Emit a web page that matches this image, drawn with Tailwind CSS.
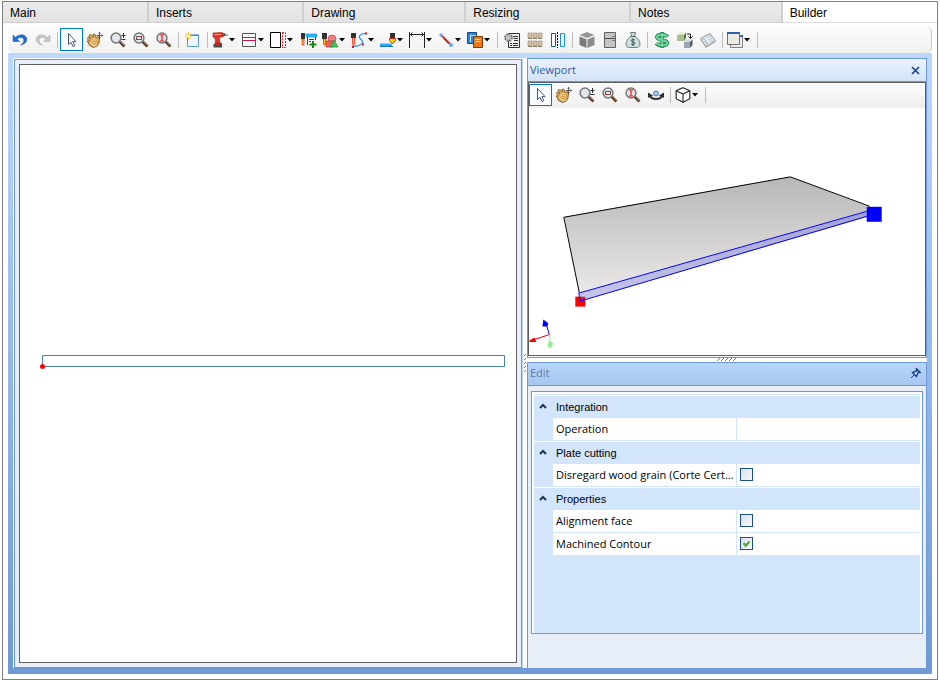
<!DOCTYPE html>
<html lang="en">
<head>
  <meta charset="UTF-8">
  <meta name="viewport" content="width=device-width, initial-scale=1">
  <title>Builder</title>
  <script src="https://cdn.jsdelivr.net/npm/@tailwindcss/browser@4"></script>
</head>
<body class="bg-white h-screen px-[2px] py-px font-['Open_Sans',sans-serif] text-[11px] text-black">

  <!-- Shared icons -->
  <svg class="hidden" aria-hidden="true">
    <symbol id="iconPointer" viewBox="0 0 16 16">
      <path d="M4.500 1.500v11l2.500-2.200 2 4.200 1.800-.9-2-4h3.200z" fill="#fff" stroke="#4a5878"/>
    </symbol>
    <symbol id="iconHand" viewBox="0 0 16 16">
      <path d="M0 6.500 1.500 5l2.500 2-2-3.500L3.500 2l3 3.500L6 2.500l1.500-.5L9.500 6l1.300-1.500 1.700 1-.5 5.500-2 3-3.500 1.500-4-2L1 10.500l-1-1.500L2.500 9z" fill="#e2ae5c" stroke="#7a5020" stroke-width=".9"/>
      <path d="M3 10l4 4 3-1M4 7l2 2M6.500 5.500l1.500 3" stroke="#fbe0a8" fill="none"/>
      <path d="M12.500 0v7M9.500 3.500h7M11.500 1.500l1-1 1 1M11.500 5.500l1 1 1-1M14.500 2.500l1 1-1 1" stroke="#404040" fill="none" stroke-width=".8"/>
    </symbol>
    <symbol id="iconLens" viewBox="0 0 16 16">
      <path d="M9.500 9.500l5 5" stroke="#5c3d28" stroke-width="2.800"/>
      <path d="M10 9l4.500 4.500" stroke="#b58a5c" stroke-width=".9"/>
      <circle cx="6" cy="6" r="4.900" fill="#dfe6ee" stroke="#767676" stroke-width="1.500"/>
    </symbol>
    <symbol id="iconZoomDynamic" viewBox="0 0 16 16">
      <use href="#iconLens" width="16" height="16"/>
      <path d="M11.500 3.500h4M13.500 1v5M11.500 7.500h4" stroke="#303030" fill="none"/>
    </symbol>
    <symbol id="iconZoomWindow" viewBox="0 0 16 16">
      <use href="#iconLens" width="16" height="16"/>
      <path d="M3.500 4.500h5v3h-5z" stroke="#555" fill="#f4dede"/>
      <path d="M3 7.500h3M6.500 4.500h2.500" stroke="#d02020"/>
    </symbol>
    <symbol id="iconZoomAll" viewBox="0 0 16 16">
      <use href="#iconLens" width="16" height="16"/>
      <path d="M6 3v6M4 3h4M4 9h4" stroke="#f04848" stroke-width="1.600"/>
    </symbol>
    <symbol id="iconArrow" viewBox="0 0 6 4">
      <path d="M0 0h6L3 3.500z" fill="#000"/>
    </symbol>
    <symbol id="iconChevron" viewBox="0 0 8 6">
      <path d="M1 5l3-3 3 3" fill="none" stroke="#17375e" stroke-width="2"/>
    </symbol>
  </svg>

  <div class="flex h-full flex-col border border-[#808080] pb-[5px]">

    <!-- Tabs -->
    <nav class="flex h-[21px] shrink-0 font-['Liberation_Sans',Arial,sans-serif] text-[12px] leading-[22px]">
      <a href="#" class="flex-[145] border-r-2 border-b border-[#d0d0d0] bg-linear-to-b from-[#ebebeb] to-[#e2e2e2] pl-[7px]">Main</a>
      <a href="#" class="flex-[155] border-r-2 border-b border-[#d0d0d0] bg-linear-to-b from-[#ebebeb] to-[#e2e2e2] pl-[7px]">Inserts</a>
      <a href="#" class="flex-[162] border-r-2 border-b border-[#d0d0d0] bg-linear-to-b from-[#ebebeb] to-[#e2e2e2] pl-[7px]">Drawing</a>
      <a href="#" class="flex-[165] border-r-2 border-b border-[#d0d0d0] bg-linear-to-b from-[#ebebeb] to-[#e2e2e2] pl-[7px]">Resizing</a>
      <a href="#" class="flex-[151] border-r-2 border-b border-[#d0d0d0] bg-linear-to-b from-[#ebebeb] to-[#e2e2e2] pl-[7px]">Notes</a>
      <a href="#" class="flex-[156] border-b border-[#dcdcdc] bg-white pl-[7px]" aria-current="page">Builder</a>
    </nav>

    <!-- Main toolbar -->
    <div class="mx-[5px] mt-[3px] flex h-[27px] shrink-0 items-center rounded-md border-r border-[#c8c8c8] bg-linear-to-b from-[#fdfdfd] to-[#f0f0f0]" role="toolbar" aria-label="Main">
      <button type="button" class="grid h-[23px] w-[23px] place-items-center" aria-label="Undo">
        <svg class="size-4" viewBox="0 0 16 16"><path d="M1 3v6.500h6.500L5.200 7.200C7.500 4.500 12 5 11.800 8.500c-.1 2-1.500 3.500-3.300 4.500 4-.5 6.500-3 6.300-6C14.500 2.500 7.500 1 3.500 5.500z" fill="#1f6fd0" stroke="#1554a8" stroke-width=".5"/></svg>
      </button>
      <button type="button" class="grid h-[23px] w-[23px] place-items-center" aria-label="Redo">
        <svg class="size-4" viewBox="0 0 16 16"><path d="M15 3v6.500H8.500l2.300-2.300C8.500 4.500 4 5 4.200 8.500c.1 2 1.500 3.500 3.300 4.500-4-.5-6.500-3-6.300-6C1.500 2.500 8.500 1 12.500 5.500z" fill="#c6c6c6" stroke="#ababab" stroke-width=".5"/></svg>
      </button>
      <div class="flex w-[6px] justify-center"><div class="h-4 w-px bg-[#bdbdbd]"></div></div>
      <button type="button" class="grid h-[23px] w-[23px] place-items-center border border-[#0078d7] bg-[#f7fbff]" aria-label="Select" aria-pressed="true">
        <svg class="size-4"><use href="#iconPointer"/></svg>
      </button>
      <button type="button" class="grid h-[23px] w-[23px] place-items-center" aria-label="Pan">
        <svg class="size-4 overflow-visible"><use href="#iconHand"/></svg>
      </button>
      <button type="button" class="grid h-[23px] w-[23px] place-items-center" aria-label="Zoom in or out">
        <svg class="size-4"><use href="#iconZoomDynamic"/></svg>
      </button>
      <button type="button" class="grid h-[23px] w-[23px] place-items-center" aria-label="Zoom window">
        <svg class="size-4"><use href="#iconZoomWindow"/></svg>
      </button>
      <button type="button" class="grid h-[23px] w-[23px] place-items-center" aria-label="Zoom all">
        <svg class="size-4"><use href="#iconZoomAll"/></svg>
      </button>
      <div class="flex w-[6px] justify-center"><div class="h-4 w-px bg-[#bdbdbd]"></div></div>
      <button type="button" class="grid h-[23px] w-[23px] place-items-center" aria-label="New">
        <svg class="size-4" viewBox="0 0 16 16"><path d="M2.500 3.500h11v11h-11z" fill="#eaf5ff" stroke="#5a9bd8"/><path d="M2 3h12" stroke="#2a78c8"/><path d="M3.500 0v8M0 4h7.500M1 1.500l5 5M6 1.500l-5 5" stroke="#f5c52c"/><circle cx="3.500" cy="4" r="1.500" fill="#fff6b0"/></svg>
      </button>
      <div class="flex w-[6px] justify-center"><div class="h-4 w-px bg-[#bdbdbd]"></div></div>
      <button type="button" class="flex h-[23px] w-[29px] items-center gap-px pl-[2px]" aria-label="Drill">
        <svg class="size-4" viewBox="0 0 16 16"><path d="M1 1l9-.5 1.500 1v3L7.500 5.500 8 11H3.500L3 6 1 5z" fill="#e03428" stroke="#a81c14" stroke-width=".6"/><path d="M2 2.500h7" stroke="#ff8c78"/><path d="M11.500 1.500h2v2.500h-2z" fill="#444"/><path d="M13.500 3H16" stroke="#666"/><path d="M3 11h7v4.500H1.500V12.500z" fill="#4a4a4a"/><path d="M3 12.500h5" stroke="#e03428"/></svg>
        <svg class="h-1 w-1.5"><use href="#iconArrow"/></svg>
      </button>
      <button type="button" class="flex h-[23px] w-[29px] items-center gap-px pl-[2px]" aria-label="Shelf">
        <svg class="size-4" viewBox="0 0 16 16"><path d="M1.500 1.500h13v13h-13z" fill="#fafafa" stroke="#555"/><path d="M2 5.500h12M2 8.500h12" stroke="#d4145a" stroke-width="1.200"/></svg>
        <svg class="h-1 w-1.5"><use href="#iconArrow"/></svg>
      </button>
      <button type="button" class="flex h-[23px] w-[29px] items-center gap-px pl-[2px]" aria-label="Edge">
        <svg class="size-4" viewBox="0 0 16 16"><path d="M.5.500h10v15H.5z" fill="#fff" stroke="#000"/><path d="M12.500 .5v15M12 .5h3.500v15H12" fill="none" stroke="#e02020" stroke-dasharray="2 1"/></svg>
        <svg class="h-1 w-1.5"><use href="#iconArrow"/></svg>
      </button>
      <button type="button" class="grid h-[23px] w-[23px] place-items-center" aria-label="Add machining">
        <svg class="size-4" viewBox="0 0 16 16"><path d="M0 1h4v6H0z" fill="#303030"/><path d="M1 7h2v6H1z" fill="#ffc800" stroke="#e02020" stroke-width=".7"/><path d="M5 2h11v3H5z" fill="#28b8f0" stroke="#1080d0" stroke-width=".6"/><path d="M6.500 5v8M14.500 5v3M8 7.500h5M8 9.500h2" stroke="#404040"/><path d="M12 9v7M8.500 12.500h7" stroke="#108a10" stroke-width="2"/></svg>
      </button>
      <button type="button" class="flex h-[23px] w-[29px] items-center gap-px pl-[2px]" aria-label="Shapes">
        <svg class="size-4" viewBox="0 0 16 16"><circle cx="10" cy="7" r="4" fill="#f08080" stroke="#c83c3c" stroke-width=".7"/><path d="M4 9h7v6H4z" fill="#f06060" stroke="#b03030" stroke-width=".7"/><path d="M12 8l4 7H8z" fill="#44c454" stroke="#1c8c30" stroke-width=".7"/><path d="M0 1h5v6H0z" fill="#303030"/><path d="M1.500 7h2v5l-1 1.500-1-1.500z" fill="#ffc800" stroke="#e02020" stroke-width=".7"/></svg>
        <svg class="h-1 w-1.5"><use href="#iconArrow"/></svg>
      </button>
      <button type="button" class="flex h-[23px] w-[29px] items-center gap-px pl-[2px]" aria-label="Contour">
        <svg class="size-4" viewBox="0 0 16 16"><path d="M14.500 1.500C8 2 7 5 10 7.500s2 6-8 7" fill="none" stroke="#2090f0" stroke-width="1.200"/><path d="M0 1h5v5H0z" fill="#303030"/><path d="M1.500 6h2v6l-1 2-1-2z" fill="#ffc800" stroke="#e02020" stroke-width=".7"/><path d="M14 .5h2v2h-2zM1 14h2v2H1zM11 11.500h2v2h-2z" fill="#f01010"/></svg>
        <svg class="h-1 w-1.5"><use href="#iconArrow"/></svg>
      </button>
      <button type="button" class="flex h-[23px] w-[29px] items-center gap-px pl-[2px]" aria-label="Surface milling">
        <svg class="size-4" viewBox="0 0 16 16"><path d="M10 1h5v5h-5z" fill="#303030"/><path d="M9.500 6.500h6v2l-3 3.500-3-3.500z" fill="#ffe000" stroke="#e02020"/><path d="M0 11.500h10l2 1V14H0z" fill="#30a8f0"/><path d="M0 14.500h13" stroke="#1070c0"/></svg>
        <svg class="h-1 w-1.5"><use href="#iconArrow"/></svg>
      </button>
      <button type="button" class="flex h-[23px] w-[29px] items-center gap-px pl-[2px]" aria-label="Dimension">
        <svg class="size-4" viewBox="0 0 16 16"><path d="M.5 0v16M15.500 0v16M1 2.500h14M3.500.500l-2 2 2 2M12.500.500l2 2-2 2" fill="none" stroke="#202020"/></svg>
        <svg class="h-1 w-1.5"><use href="#iconArrow"/></svg>
      </button>
      <button type="button" class="flex h-[23px] w-[29px] items-center gap-px pl-[2px]" aria-label="Line">
        <svg class="size-4" viewBox="0 0 16 16"><path d="M3 3l10 10" stroke="#e02828" stroke-width="1.800"/><path d="M6 7l4 4" stroke="#802020"/><circle cx="3" cy="3" r="1.700" fill="#6aaef0"/><circle cx="13" cy="13" r="2" fill="#6aaef0"/></svg>
        <svg class="h-1 w-1.5"><use href="#iconArrow"/></svg>
      </button>
      <button type="button" class="flex h-[23px] w-[29px] items-center gap-px pl-[2px]" aria-label="Copy parts">
        <svg class="size-4" viewBox="0 0 16 16"><path d="M.5.500h9v11h-9z" fill="#2c86d8" stroke="#124a90"/><path d="M3 3.500h6M3.500 4v6" stroke="#b8e0ff"/><path d="M6.500 4.500h9v11h-9z" fill="#e87818" stroke="#803c08"/><path d="M8.500 7.500h5M8.500 9.500h5" stroke="#ffe4c0"/></svg>
        <svg class="h-1 w-1.5"><use href="#iconArrow"/></svg>
      </button>
      <div class="flex w-[6px] justify-center"><div class="h-4 w-px bg-[#bdbdbd]"></div></div>
      <button type="button" class="grid h-[23px] w-[23px] place-items-center" aria-label="Report settings">
        <svg class="size-4" viewBox="0 0 16 16"><path d="M4.500 1.500h11v14h-11z" fill="#f4f4f4" stroke="#303030"/><path d="M9 4.500h5M9.500 6.500h4.500M10 8.500h4M6 11.500h2M9 11.500h5M6 13.500h2M9 13.500h5" stroke="#303030" stroke-width="1.200"/><circle cx="4.500" cy="5.500" r="3.500" fill="#d0d0d0" stroke="#707070" stroke-width="1.800" stroke-dasharray="1.800 .9"/><circle cx="4.500" cy="5.500" r="1.300" fill="#fff" stroke="#606060" stroke-width=".6"/></svg>
      </button>
      <button type="button" class="grid h-[23px] w-[23px] place-items-center" aria-label="Materials">
        <svg class="size-4" viewBox="0 0 16 16"><path d="M1 1h4v5H1zM6 1h4v5H6zM11 1h4v5h-4zM1 9h4v5H1zM6 9h4v5H6zM11 9h4v5h-4z" fill="#d4c0a8" stroke="#a89478" stroke-width=".7"/><path d="M1 6.500h4M6 6.500h4M11 6.500h4M1 14.500h4M6 14.500h4M11 14.500h4" stroke="#8c7860"/></svg>
      </button>
      <button type="button" class="grid h-[23px] w-[23px] place-items-center" aria-label="Mirror">
        <svg class="size-4" viewBox="0 0 16 16"><path d="M1.500 1.500h4v13h-4z" fill="#fff" stroke="#1a5a98"/><path d="M10.500 1.500h4v13h-4z" fill="#fff" stroke="#1090f0"/><path d="M7.500 0v16" stroke="#000" stroke-dasharray="2 1"/></svg>
      </button>
      <div class="flex w-[6px] justify-center"><div class="h-4 w-px bg-[#bdbdbd]"></div></div>
      <button type="button" class="grid h-[23px] w-[23px] place-items-center" aria-label="Module">
        <svg class="size-4" viewBox="0 0 16 16"><path d="M8 0l7.500 3L8 6 .5 3z" fill="#969696"/><path d="M.5 4.500l7 2.800V16l-7-3z" fill="#7c7c7c"/><path d="M15.500 4.500l-7 2.800V16l7-3z" fill="#8a8a8a"/></svg>
      </button>
      <button type="button" class="grid h-[23px] w-[23px] place-items-center" aria-label="Cabinet">
        <svg class="size-4" viewBox="0 0 16 16"><path d="M2.500.500h11v15h-11z" fill="#c4c4c4" stroke="#606060"/><path d="M3 6.500h10" stroke="#505050"/><path d="M10 4.500h3M10 8.500h3" stroke="#808080"/></svg>
      </button>
      <button type="button" class="grid h-[23px] w-[23px] place-items-center" aria-label="Budget">
        <svg class="size-4" viewBox="0 0 16 16"><path d="M5.500.500h5L9.500 4c3 1.500 5.500 5 5.500 8 0 2.500-1.500 3.500-4 3.500H5C2.500 15.500 1 14.500 1 12c0-3 2.500-6.500 5.500-8z" fill="#d2dedd" stroke="#6c8080"/><path d="M6 4.500h4" stroke="#506464"/><path d="M9.800 8C8.500 6.800 6.200 7.300 6.300 8.700c.1 1.600 3.600.9 3.600 2.600 0 1.500-2.600 1.800-3.900.5M8 6.500v7.500" fill="none" stroke="#285858"/></svg>
      </button>
      <div class="flex w-[6px] justify-center"><div class="h-4 w-px bg-[#bdbdbd]"></div></div>
      <button type="button" class="grid h-[23px] w-[23px] place-items-center" aria-label="Prices">
        <svg class="size-4" viewBox="0 0 16 16"><path d="M13.500 5C12 2.500 3.500 1.800 3 5c-.4 3.500 10.500 2.300 10.300 6-.2 3-8.800 3-11 .2M8.200 0v16" fill="none" stroke="#2a8a58" stroke-width="4"/><path d="M13.500 5C12 2.500 3.500 1.800 3 5c-.4 3.500 10.500 2.300 10.300 6-.2 3-8.800 3-11 .2M8.200 1v14" fill="none" stroke="#74d4a0" stroke-width="2"/></svg>
      </button>
      <button type="button" class="grid h-[23px] w-[23px] place-items-center" aria-label="Replace module">
        <svg class="size-4" viewBox="0 0 16 16"><path d="M0 3l3-2.500h6L7 3z" fill="#dce8c8"/><path d="M0 3h7v6H0z" fill="#a8c090"/><path d="M7 3l2-2.500V6L7 9z" fill="#607850"/><path d="M7 10l2-2.500h6L13 10z" fill="#d0d8e0"/><path d="M7 10h6v6H7z" fill="#98a4b0"/><path d="M13 10l2.500-2.500V13L13 16z" fill="#505c68"/><path d="M10 2h3.500v4M11.500 4.500l2 2 2-2" fill="none" stroke="#202020"/></svg>
      </button>
      <button type="button" class="grid h-[23px] w-[23px] place-items-center" aria-label="Cutting list">
        <svg class="size-4" viewBox="0 0 16 16"><path d="M.5 6.500L10 1.500l5.500 7.500L6 14.500z" fill="#e4eaee" stroke="#8c9499"/><path d="M.5 7.500l5.500 8 9.500-6" fill="none" stroke="#a8b0b4"/><path d="M7 5.500l4-2M8.500 8l4-2M10 10l3-1.500" stroke="#b4c0c8"/><path d="M3.500 7.500l1-.5M5 9.500l1-.5M6.500 11.500l1-.5" stroke="#3878b8" stroke-width="1.300"/></svg>
      </button>
      <div class="flex w-[6px] justify-center"><div class="h-4 w-px bg-[#bdbdbd]"></div></div>
      <button type="button" class="flex h-[23px] w-[29px] items-center gap-px pl-[2px]" aria-label="Windows">
        <svg class="size-4" viewBox="0 0 16 16"><path d="M3.500 3.500h12v12h-12z" fill="#eee" stroke="#808080"/><path d="M3 4h13" stroke="#3868b0" stroke-width="2"/><path d="M.5.500h12v12H.5z" fill="#eceae4" stroke="#707070"/><path d="M0 1h13" stroke="#3060a8" stroke-width="2"/></svg>
        <svg class="h-1 w-1.5"><use href="#iconArrow"/></svg>
      </button>
      <div class="flex w-[6px] justify-center"><div class="h-4 w-px bg-[#bdbdbd]"></div></div>
    </div>

    <!-- Work area -->
    <main class="mx-[5px] grid min-h-0 flex-1 grid-cols-[minmax(0,510fr)_4px_minmax(0,400fr)] bg-linear-to-b from-[#bdd8ff] to-[#6d99d4] px-[5px] pt-[5px] pb-[6px]">

      <!-- Drawing area -->
      <section class="border-x border-t border-l-white border-r-[#bdd7ff] border-t-white">
        <div class="h-full border border-[#6b98d6] bg-[#e8eff9] p-[4px]">
          <div class="h-full border border-[#5f5f5f] bg-white">
            <svg class="h-full w-full" viewBox="0 0 496 597" role="img" aria-label="Front view of the plate">
              <path d="M22.500 290.500h462v11h-462z" fill="none" stroke="#4682b4"/>
              <circle cx="22.500" cy="301.500" r="2.500" fill="#f00"/>
            </svg>
          </div>
        </div>
      </section>

      <!-- Vertical splitter -->
      <div class="grid place-items-center bg-white">
        <svg class="h-[18px] w-[3px]" viewBox="0 0 3 18"><path d="M0 2l2-2M0 6l2-2M0 10l2-2M0 14l2-2M0 18l2-2" stroke="#4a80c8"/></svg>
      </div>

      <div class="flex min-h-0 flex-col">

        <!-- Viewport -->
        <section class="flex min-h-0 flex-[299] flex-col border border-[#6b98d6]">
          <header class="flex h-[23px] shrink-0 items-center justify-between border-b border-[#6b98d6] bg-linear-to-b from-[#ebf2fc] to-[#d3e3f7] pr-[6px] pl-[2px]">
            <h2 class="text-[#2d5a9e]">Viewport</h2>
            <button type="button" aria-label="Close">
              <svg class="size-[9px]" viewBox="0 0 9 9"><path d="M1 1l7 7M8 1L1 8" stroke="#15428b" stroke-width="1.600"/></svg>
            </button>
          </header>
          <div class="flex min-h-0 flex-1 flex-col border border-[#5f5f5f] bg-white">
            <div class="flex h-[25px] shrink-0 items-start bg-linear-to-b from-[#fbfbfb] to-[#efefef] pt-px" role="toolbar" aria-label="Viewport">
              <button type="button" class="grid h-[22px] w-[23px] place-items-center border border-[#0078d7] bg-[#f7fbff]" aria-label="Select" aria-pressed="true">
                <svg class="size-4"><use href="#iconPointer"/></svg>
              </button>
              <button type="button" class="grid h-[22px] w-[23px] place-items-center" aria-label="Pan">
                <svg class="size-4 overflow-visible"><use href="#iconHand"/></svg>
              </button>
              <button type="button" class="grid h-[22px] w-[23px] place-items-center" aria-label="Zoom in or out">
                <svg class="size-4"><use href="#iconZoomDynamic"/></svg>
              </button>
              <button type="button" class="grid h-[22px] w-[23px] place-items-center" aria-label="Zoom window">
                <svg class="size-4"><use href="#iconZoomWindow"/></svg>
              </button>
              <button type="button" class="grid h-[22px] w-[23px] place-items-center" aria-label="Zoom all">
                <svg class="size-4"><use href="#iconZoomAll"/></svg>
              </button>
              <button type="button" class="grid h-[22px] w-[23px] place-items-center" aria-label="Orbit">
                <svg class="size-4" viewBox="0 0 16 16"><path d="M2 9c2 4 10 4 12 0" fill="none" stroke="#303030" stroke-width="2"/><path d="M0 11V5.500l5 3zM16 11V5.500l-5 3z" fill="#303030"/><circle cx="8" cy="6.500" r="2.500" fill="#a8c8f0" stroke="#4a78b8"/></svg>
              </button>
              <div class="flex h-[22px] w-[6px] items-center justify-center"><div class="h-4 w-px bg-[#bdbdbd]"></div></div>
              <button type="button" class="flex h-[22px] w-[29px] items-center gap-px pl-[2px]" aria-label="View">
                <svg class="size-4" viewBox="0 0 16 16"><path d="M8 .7l6.800 3v8L8 15.300 1.200 11.700v-8zM1.200 3.700L8 7l6.800-3.300M8 7v8" fill="#fff" stroke="#303030" stroke-width="1.200"/></svg>
                <svg class="h-1 w-1.5"><use href="#iconArrow"/></svg>
              </button>
              <div class="flex h-[22px] w-[6px] items-center justify-center"><div class="h-4 w-px bg-[#bdbdbd]"></div></div>
            </div>
            <svg class="min-h-0 w-full flex-1" viewBox="0 0 396 247" role="img" aria-label="Plate in perspective">
              <defs>
                <linearGradient id="plateTop" x1="0" y1="0" x2="0" y2="1">
                  <stop offset="0" stop-color="#b8b7b6"/>
                  <stop offset="1" stop-color="#ebe9e8"/>
                </linearGradient>
                <linearGradient id="plateEdge" x1="0" y1="0" x2="1" y2="0">
                  <stop offset="0" stop-color="#c6c5ea"/>
                  <stop offset="1" stop-color="#a3a2cc"/>
                </linearGradient>
              </defs>
              <path d="M35 109L261 69 346 101 50 186z" fill="url(#plateTop)"/>
              <path d="M46 189h10v10H46z" fill="#f00"/>
              <path d="M50 185.500L346 101.500V107L51 193.500z" fill="url(#plateEdge)"/>
              <path d="M50 189h6v3l-5 2z" fill="#c01850"/>
              <path d="M50 185L34.500 109.500 261.500 69 341 98.500" fill="none" stroke="#000"/>
              <path d="M340 103L49.500 185.500l1.500 8L340 108" fill="none" stroke="#00f"/>
              <path d="M338 99h15v15h-15z" fill="#00f"/>
              <path d="M20 227L2 233" stroke="#f00"/>
              <path d="M0 233l5-3 2 4.500H0z" fill="#f00"/>
              <path d="M20 227l-4-13" stroke="#00f"/>
              <path d="M14 212l5 4-1 3h-5z" fill="#00f"/>
              <path d="M20.500 227v9" stroke="#90ee90"/>
              <path d="M20 233l4 3-3 5-3-3z" fill="#90ee90"/>
            </svg>
          </div>
          <div class="h-px shrink-0 bg-white"></div>
        </section>

        <!-- Horizontal splitter -->
        <div class="grid h-[4px] shrink-0 place-items-center bg-white">
          <svg class="h-[3px] w-[20px]" viewBox="0 0 20 3"><path d="M0 3l3-3M4 3l3-3M8 3l3-3M12 3l3-3M16 3l3-3" stroke="#4a80c8"/></svg>
        </div>

        <!-- Edit -->
        <section class="flex min-h-0 flex-[307] flex-col border border-b-0 border-[#6b98d6] bg-[#e8eff9]">
          <header class="flex h-[23px] shrink-0 items-center justify-between border-b border-[#6b98d6] bg-linear-to-b from-[#b8d5fa] to-[#a7c6ee] pr-[5px] pl-[2px]">
            <h2 class="text-[#5f7ba5]">Edit</h2>
            <button type="button" aria-label="Auto hide">
              <svg class="size-[11px]" viewBox="0 0 11 11"><path d="M1 10l3-3" stroke="#15428b"/><path d="M2 4l5 5M3 4.500L6.500 3 6.500.800 10.200 4.500H8L6.500 8" fill="#eaf3ff" stroke="#15428b" stroke-width="1.500"/></svg>
            </button>
          </header>

          <div class="mx-[3px] mt-[5px] mb-[34px] min-h-0 flex-1 border border-[#6b98d6] bg-white px-[2px] pt-[2px]">
            <div class="h-full bg-[#d3e5fb]">
              <table class="w-full table-fixed border-separate border-spacing-0 pt-px text-left leading-[22px]">
                <colgroup>
                  <col class="w-[19px]">
                  <col class="w-[184px]">
                  <col>
                </colgroup>
                <tbody>
                  <tr>
                    <th class="h-[23px] border-t border-white p-0 pb-px pl-[5px]"><button type="button" class="block" aria-label="Collapse Integration"><svg class="h-1.5 w-2"><use href="#iconChevron"/></svg></button></th>
                    <th colspan="2" class="h-[23px] border-t border-white p-0 pl-[3px] font-['Liberation_Sans',Arial,sans-serif] leading-[20px] font-normal">Integration</th>
                  </tr>
                  <tr>
                    <td class="h-[23px] p-0"></td>
                    <td class="h-[23px] truncate border-r border-b border-[#d3e5fb] bg-white p-0 pl-[3px]">Operation</td>
                    <td class="h-[23px] border-b border-[#d3e5fb] bg-white p-0"></td>
                  </tr>
                </tbody>
                <tbody>
                  <tr>
                    <th class="h-[23px] border-t border-white p-0 pb-px pl-[5px]"><button type="button" class="block" aria-label="Collapse Plate cutting"><svg class="h-1.5 w-2"><use href="#iconChevron"/></svg></button></th>
                    <th colspan="2" class="h-[23px] border-t border-white p-0 pl-[3px] font-['Liberation_Sans',Arial,sans-serif] leading-[20px] font-normal">Plate cutting</th>
                  </tr>
                  <tr>
                    <td class="h-[23px] p-0"></td>
                    <td class="h-[23px] truncate border-r border-b border-[#d3e5fb] bg-white p-0 pl-[3px]"><label for="inputWoodGrain">Disregard wood grain (Corte Cert...</label></td>
                    <td class="h-[23px] border-b border-[#d3e5fb] bg-white p-0 pl-[3px]">
                      <input type="checkbox" id="inputWoodGrain" class="block size-[13px] appearance-none border border-[#1c5180] bg-linear-to-br from-[#dcdfe8] to-[#f8f8fa]">
                    </td>
                  </tr>
                </tbody>
                <tbody>
                  <tr>
                    <th class="h-[23px] border-t border-white p-0 pb-px pl-[5px]"><button type="button" class="block" aria-label="Collapse Properties"><svg class="h-1.5 w-2"><use href="#iconChevron"/></svg></button></th>
                    <th colspan="2" class="h-[23px] border-t border-white p-0 pl-[3px] font-['Liberation_Sans',Arial,sans-serif] leading-[20px] font-normal">Properties</th>
                  </tr>
                  <tr>
                    <td class="h-[23px] p-0"></td>
                    <td class="h-[23px] truncate border-r border-b border-[#d3e5fb] bg-white p-0 pl-[3px]"><label for="inputAlignmentFace">Alignment face</label></td>
                    <td class="h-[23px] border-b border-[#d3e5fb] bg-white p-0 pl-[3px]">
                      <input type="checkbox" id="inputAlignmentFace" class="block size-[13px] appearance-none border border-[#1c5180] bg-linear-to-br from-[#dcdfe8] to-[#f8f8fa]">
                    </td>
                  </tr>
                  <tr>
                    <td class="h-[23px] p-0"></td>
                    <td class="h-[23px] truncate border-r border-b border-[#d3e5fb] bg-white p-0 pl-[3px]"><label for="inputMachinedContour">Machined Contour</label></td>
                    <td class="h-[23px] border-b border-[#d3e5fb] bg-white p-0 pl-[3px]">
                      <div class="grid w-[13px]">
                        <input type="checkbox" id="inputMachinedContour" checked class="peer col-start-1 row-start-1 block size-[13px] appearance-none border border-[#1c5180] bg-linear-to-br from-[#dcdfe8] to-[#f8f8fa]">
                        <svg class="pointer-events-none invisible col-start-1 row-start-1 size-[13px] peer-checked:visible" viewBox="0 0 13 13"><path d="M3.500 6l2.200 2.700L9.500 4.500" fill="none" stroke="#4caf3c" stroke-width="2.200"/></svg>
                      </div>
                    </td>
                  </tr>
                </tbody>
              </table>
            </div>
          </div>
        </section>
      </div>
    </main>
  </div>

</body>
</html>
